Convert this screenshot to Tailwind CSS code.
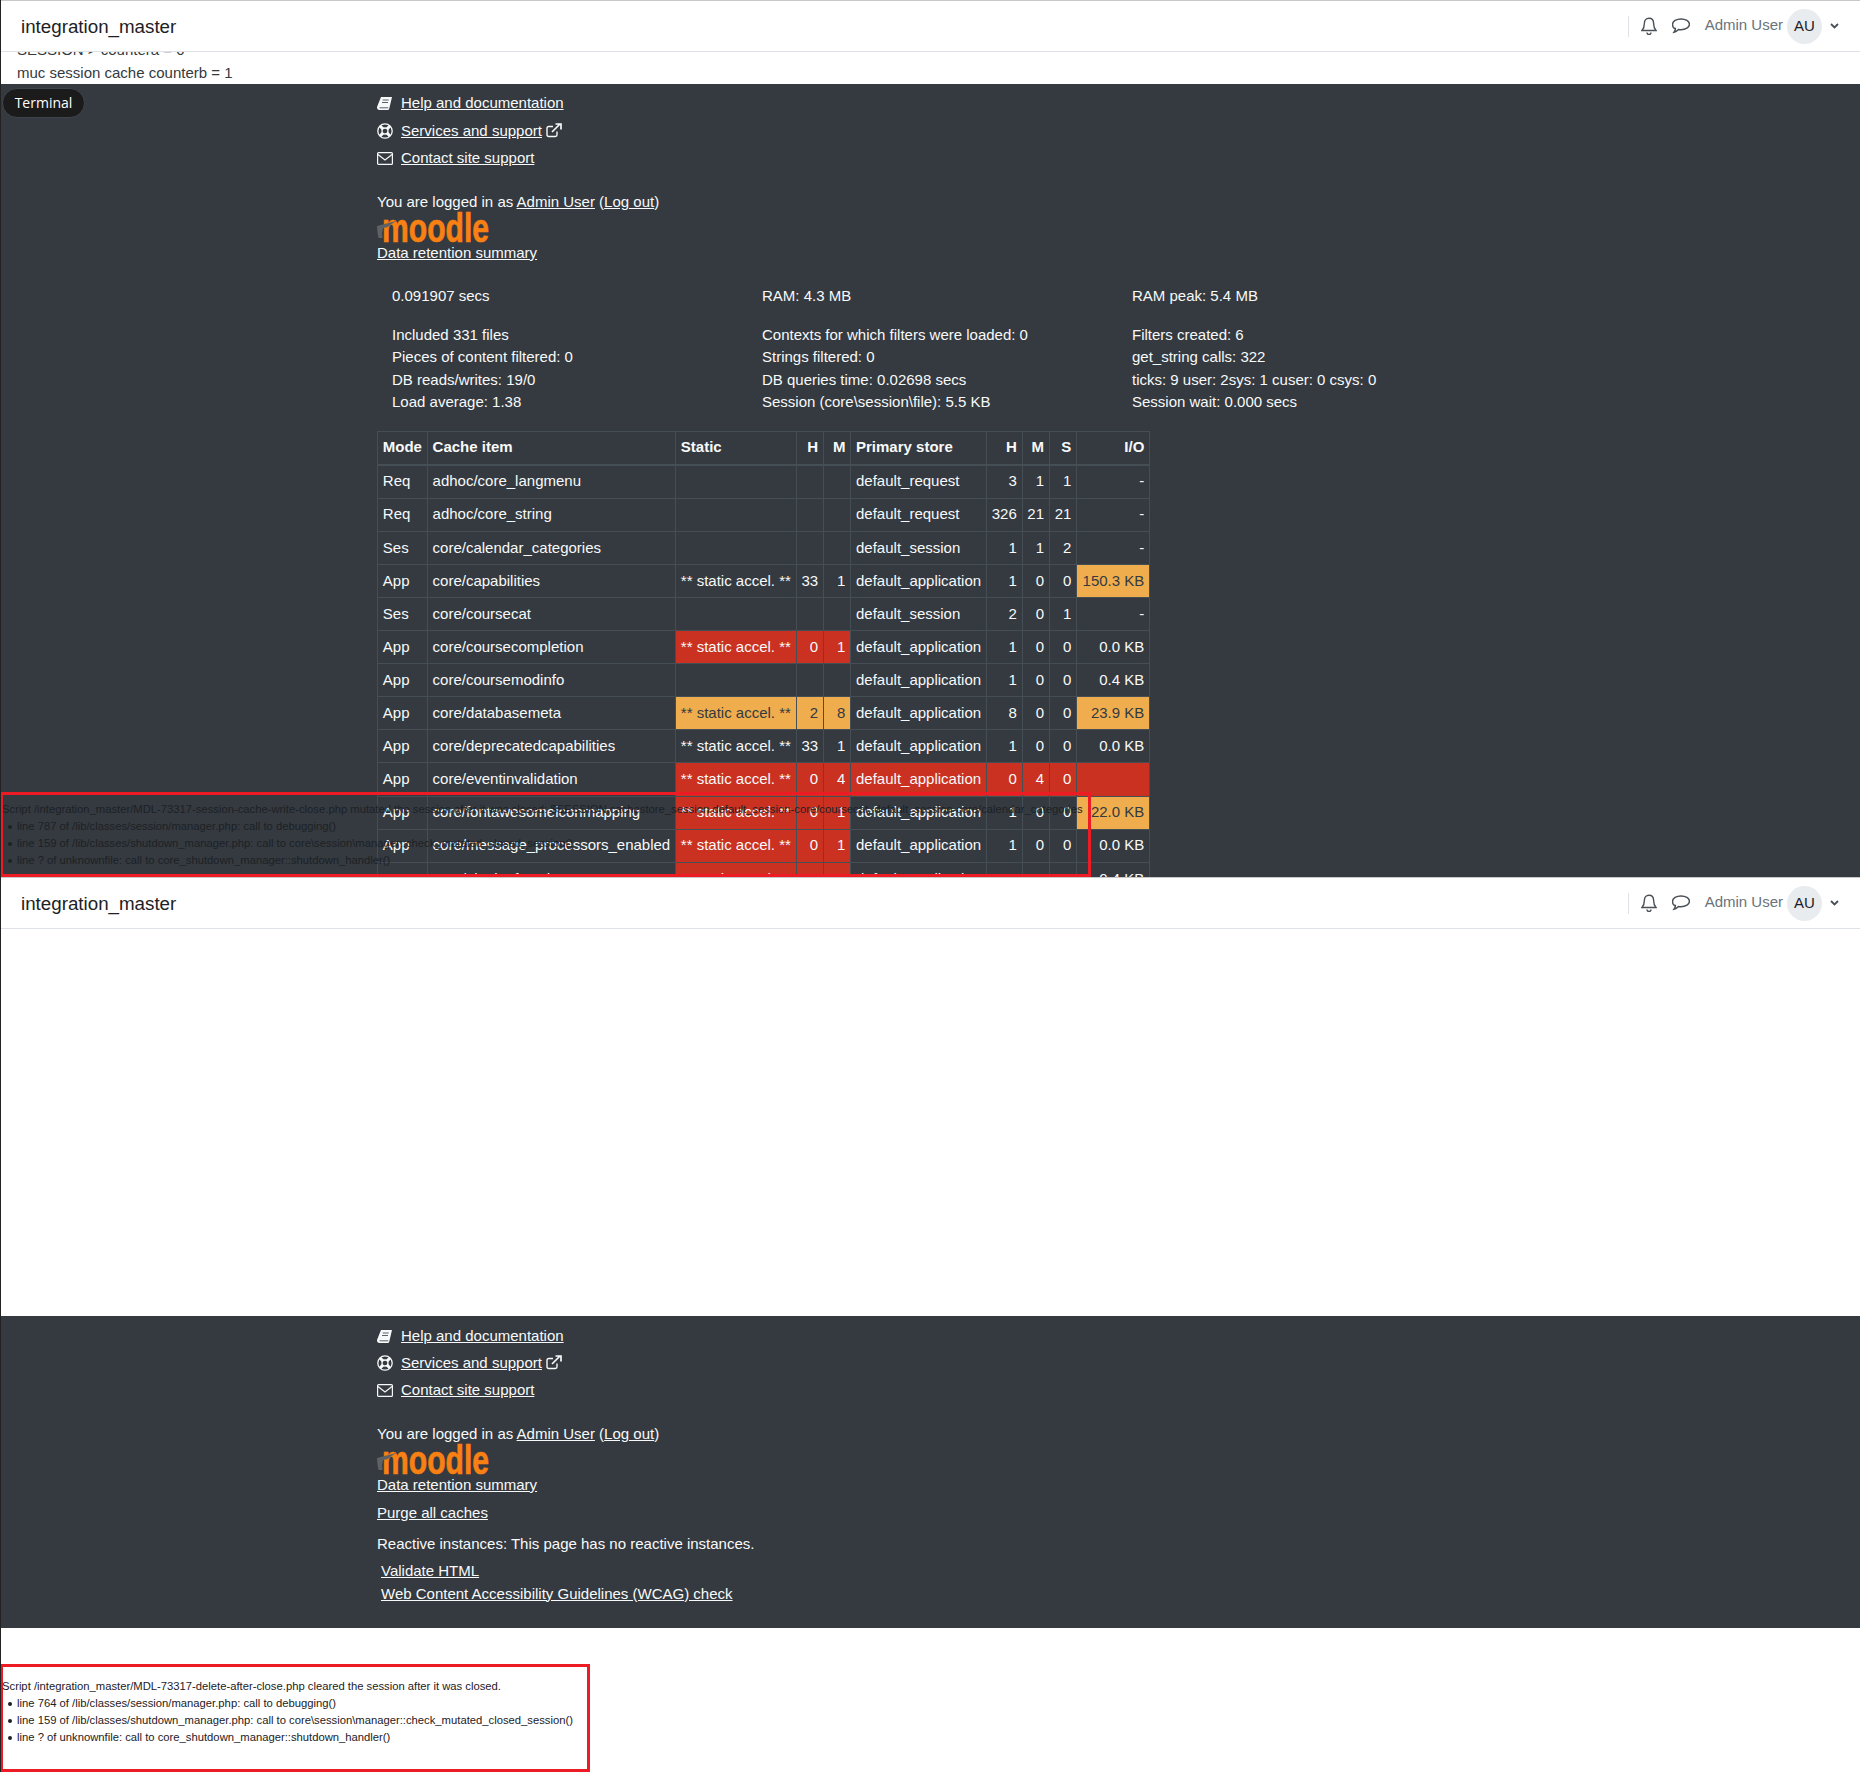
<!DOCTYPE html>
<html lang="en">
  <head>
    <meta charset="UTF-8" />
    <title>integration_master</title>
    <script src="https://cdn.jsdelivr.net/npm/@tailwindcss/browser@4"></script>
  </head>
  <body class="bg-white font-['Liberation_Sans',Arial,sans-serif] text-[15px] leading-[22.5px] text-[#1d2125]">
    <!-- first capture -->
    <div class="relative h-[877px] overflow-hidden border-l border-[#222]">
      <header class="flex h-[52px] items-center border-t border-b border-t-[#c8c8c8] border-b-[#dee2e6] pl-[20px] pr-[21px]">
        <span class="pt-[2px] text-[18.75px]">integration_master</span>
        <div class="ml-auto flex h-[21px] items-center border-l border-[#dee2e6] pl-[12px]">
          <svg class="h-[18px] w-[16px]" viewBox="0 0 16 18" fill="none" stroke="#495057" stroke-width="1.4"><path d="M8 1.2c-3 0-4.6 2.3-4.6 5 0 4-1 5.6-2.4 7.3h14c-1.400-1.700-2.400-3.300-2.400-7.300 0-2.700-1.600-5-4.600-5z" /><path d="M6 15.500a2 2 0 0 0 4 0" /></svg>
          <svg class="ml-[15px] h-[16px] w-[18px]" viewBox="0.500 0.500 16 14" fill="none" stroke="#495057" stroke-width="1.3"><path d="M8.500 1.200c4 0 7.500 2 7.500 4.800s-3.500 4.800-7.500 4.800c-.8 0-1.500-.1-2.200-.2-1 1-2.500 2.300-4 2.500.7-.9 1.100-2 1.200-3.300C2 9.800 1 8 1 6c0-2.800 3.500-4.800 7.500-4.800z" /></svg>
          <span class="mb-[2px] ml-[15px] text-[#6a737b]">Admin User</span>
          <span class="ml-[4px] flex h-[35px] w-[35px] items-center justify-center rounded-full bg-[#e9ecef]">AU</span>
          <svg class="ml-[8px] h-[8px] w-[9px]" viewBox="0 0 9 8" fill="none" stroke="#495057" stroke-width="1.800"><path d="M1 2l3.500 3.500L8 2" /></svg>
        </div>
      </header>
      <div class="flex h-[32px] flex-col justify-end overflow-hidden pl-[16px] text-[#343a40]">
        <div class="shrink-0">SESSION &gt; countera = 0</div>
        <div class="shrink-0">muc session cache counterb = 1</div>
      </div>
      <footer class="relative bg-[#343a40] pl-[376px] pt-[6px] text-[#f8f9fa]">
        <div class="absolute left-[1px] top-[4px] flex h-[30px] w-[83px] items-center justify-center rounded-full border border-[#3f454c] bg-[#1b1b1b] font-['Open_Sans',sans-serif] text-[14px] text-white">Terminal</div>
        <div class="flex h-[27px] items-center">
          <svg class="h-[14px] w-[15px]" viewBox="0 0 15 14" fill="#f8f9fa"><path d="M4 0H15l-2.700 11.500c-.2.800-.7 1.500-1.500 1.500H2.300C1 13 0 12 0 10.600c0-.4.100-.8.200-1.200z" /><path d="M5.700 3h6M5 5.500h6M2.500 10.800h8.800" stroke="#343a40" stroke-width=".8" /></svg>
          <a class="ml-[9px] underline" href="#">Help and documentation</a>
        </div>
        <div class="mt-[1px] flex h-[27px] items-center">
          <svg class="mb-[2px] h-[16px] w-[16px]" viewBox="0 0 16 16" fill="none" stroke="#f8f9fa"><circle cx="8" cy="8" r="7.200" stroke-width="1.300" /><circle cx="8" cy="8" r="3" stroke-width="1.300" /><path d="M3 3l2.900 2.900M13 3l-2.900 2.900M3 13l2.900-2.900M13 13l-2.900-2.900" stroke-width="3" /></svg>
          <a class="ml-[8px] underline" href="#">Services and support</a>
          <svg class="ml-[4px] mb-[3px] h-[15px] w-[16px]" viewBox="0 0 16 15" fill="none" stroke="#f8f9fa" stroke-width="1.400"><path d="M11 8.500v3.300c0 1-.7 1.700-1.700 1.700H2.700c-1 0-1.700-.7-1.700-1.700V5.200c0-1 .7-1.700 1.700-1.700H7" /><path d="M6 9l8-8M9.500 1H15v5.500" stroke-width="1.700" /></svg>
        </div>
        <div class="flex h-[27px] items-center">
          <svg class="h-[13px] w-[16px]" viewBox="0 0 16 13" fill="none" stroke="#f8f9fa" stroke-width="1.200"><rect x=".6" y=".6" width="14.800" height="11.800" rx="1" /><path d="M1 2.500l7 5.500 7-5.500" /></svg>
          <a class="ml-[8px] underline" href="#">Contact site support</a>
        </div>
        <p class="mt-[19px]">You are logged in as <a class="underline" href="#">Admin User</a> (<a class="underline" href="#">Log out</a>)</p>
        <svg class="block h-[28px] w-[115px] overflow-visible" viewBox="0 0 115 28" aria-label="moodle">
          <text x="5" y="28" textLength="107" lengthAdjust="spacingAndGlyphs" font-family="Liberation Sans" font-weight="700" font-size="40" fill="#f98012" stroke="#f98012" stroke-width=".7">moodle</text>
          <path d="M0 12L21 6.500Q14 9.500 11 13L6 14Q4.500 18 5.500 24H1.500Q0 18 0 12z" fill="#5f6264" />
        </svg>
        <a class="underline" href="#">Data retention summary</a>
        <div class="mt-[21px] grid w-[1125px] grid-cols-3 pl-[15px]">
          <div>0.091907 secs</div><div>RAM: 4.3 MB</div><div>RAM peak: 5.4 MB</div>
        </div>
        <div class="mt-[16px] grid w-[1125px] grid-cols-3 pl-[15px]">
          <div>Included 331 files</div><div>Contexts for which filters were loaded: 0</div><div>Filters created: 6</div>
          <div>Pieces of content filtered: 0</div><div>Strings filtered: 0</div><div>get_string calls: 322</div>
          <div>DB reads/writes: 19/0</div><div>DB queries time: 0.02698 secs</div><div>ticks: 9 user: 2sys: 1 cuser: 0 csys: 0</div>
          <div>Load average: 1.38</div><div>Session (core\session\file): 5.5 KB</div><div>Session wait: 0.000 secs</div>
        </div>
        <table class="mt-[17px] border-collapse whitespace-nowrap [&_td]:border [&_td]:border-[#454d55] [&_td]:p-[4.8px] [&_th]:border [&_th]:border-[#454d55] [&_th]:p-[4.8px]">
          <thead>
            <tr class="border-b-2 border-[#454d55] font-bold">
              <th class="text-left">Mode</th>
              <th class="text-left">Cache item</th>
              <th class="text-left">Static</th>
              <th class="text-right">H</th>
              <th class="text-right">M</th>
              <th class="text-left">Primary store</th>
              <th class="text-right">H</th>
              <th class="text-right">M</th>
              <th class="text-right">S</th>
              <th class="min-w-[73px] text-right">I/O</th>
            </tr>
          </thead>
          <tbody>
            <tr><td>Req</td><td>adhoc/core_langmenu</td><td></td><td></td><td></td><td>default_request</td><td class="text-right">3</td><td class="text-right">1</td><td class="text-right">1</td><td class="text-right">-</td></tr>
            <tr><td>Req</td><td>adhoc/core_string</td><td></td><td></td><td></td><td>default_request</td><td class="text-right">326</td><td class="text-right">21</td><td class="text-right">21</td><td class="text-right">-</td></tr>
            <tr><td>Ses</td><td>core/calendar_categories</td><td></td><td></td><td></td><td>default_session</td><td class="text-right">1</td><td class="text-right">1</td><td class="text-right">2</td><td class="text-right">-</td></tr>
            <tr><td>App</td><td>core/capabilities</td><td>** static accel. **</td><td class="text-right">33</td><td class="text-right">1</td><td>default_application</td><td class="text-right">1</td><td class="text-right">0</td><td class="text-right">0</td><td class="bg-[#f0ad4e] text-right text-[#343a40]">150.3 KB</td></tr>
            <tr><td>Ses</td><td>core/coursecat</td><td></td><td></td><td></td><td>default_session</td><td class="text-right">2</td><td class="text-right">0</td><td class="text-right">1</td><td class="text-right">-</td></tr>
            <tr><td>App</td><td>core/coursecompletion</td><td class="bg-[#ca3120]">** static accel. **</td><td class="bg-[#ca3120] text-right">0</td><td class="bg-[#ca3120] text-right">1</td><td>default_application</td><td class="text-right">1</td><td class="text-right">0</td><td class="text-right">0</td><td class="text-right">0.0 KB</td></tr>
            <tr><td>App</td><td>core/coursemodinfo</td><td></td><td></td><td></td><td>default_application</td><td class="text-right">1</td><td class="text-right">0</td><td class="text-right">0</td><td class="text-right">0.4 KB</td></tr>
            <tr><td>App</td><td>core/databasemeta</td><td class="bg-[#f0ad4e] text-[#343a40]">** static accel. **</td><td class="bg-[#f0ad4e] text-right text-[#343a40]">2</td><td class="bg-[#f0ad4e] text-right text-[#343a40]">8</td><td>default_application</td><td class="text-right">8</td><td class="text-right">0</td><td class="text-right">0</td><td class="bg-[#f0ad4e] text-right text-[#343a40]">23.9 KB</td></tr>
            <tr><td>App</td><td>core/deprecatedcapabilities</td><td>** static accel. **</td><td class="text-right">33</td><td class="text-right">1</td><td>default_application</td><td class="text-right">1</td><td class="text-right">0</td><td class="text-right">0</td><td class="text-right">0.0 KB</td></tr>
            <tr><td>App</td><td>core/eventinvalidation</td><td class="bg-[#ca3120]">** static accel. **</td><td class="bg-[#ca3120] text-right">0</td><td class="bg-[#ca3120] text-right">4</td><td class="bg-[#ca3120]">default_application</td><td class="bg-[#ca3120] text-right">0</td><td class="bg-[#ca3120] text-right">4</td><td class="bg-[#ca3120] text-right">0</td><td class="bg-[#ca3120] text-right"></td></tr>
            <tr><td>App</td><td>core/fontawesomeiconmapping</td><td class="bg-[#ca3120]">** static accel. **</td><td class="bg-[#ca3120] text-right">0</td><td class="bg-[#ca3120] text-right">1</td><td>default_application</td><td class="text-right">1</td><td class="text-right">0</td><td class="text-right">0</td><td class="bg-[#f0ad4e] text-right text-[#343a40]">22.0 KB</td></tr>
            <tr><td>App</td><td>core/message_processors_enabled</td><td class="bg-[#ca3120]">** static accel. **</td><td class="bg-[#ca3120] text-right">0</td><td class="bg-[#ca3120] text-right">1</td><td>default_application</td><td class="text-right">1</td><td class="text-right">0</td><td class="text-right">0</td><td class="text-right">0.0 KB</td></tr>
            <tr><td>App</td><td>core/plugin_functions</td><td class="bg-[#ca3120]">** static accel. **</td><td class="bg-[#ca3120] text-right">0</td><td class="bg-[#ca3120] text-right">10</td><td>default_application</td><td class="text-right">10</td><td class="text-right">0</td><td class="text-right">0</td><td class="text-right">0.4 KB</td></tr>
          </tbody>
        </table>
      </footer>
      <!-- debugging box lies over the page -->
      <div class="absolute bottom-0 left-[-1px] h-[85px] w-[1091px] overflow-hidden whitespace-nowrap border-[3px] border-[#ed1c24] pt-[6px] text-[11.25px] leading-[17px]">
        <div class="-ml-px">Script /integration_master/MDL-73317-session-cache-write-close.php mutated the session after it was closed: $SESSION.cachestore_session.default_session-core/coursecat, default_session-core/calendar_categories</div>
        <ul class="pl-[5px]">
          <li class="flex items-center before:mr-[5px] before:h-[4px] before:w-[4px] before:rounded-full before:bg-current before:content-['']">line 787 of /lib/classes/session/manager.php: call to debugging()</li>
          <li class="flex items-center before:mr-[5px] before:h-[4px] before:w-[4px] before:rounded-full before:bg-current before:content-['']">line 159 of /lib/classes/shutdown_manager.php: call to core\session\manager::check_mutated_closed_session()</li>
          <li class="flex items-center before:mr-[5px] before:h-[4px] before:w-[4px] before:rounded-full before:bg-current before:content-['']">line ? of unknownfile: call to core_shutdown_manager::shutdown_handler()</li>
        </ul>
      </div>
    </div>

    <!-- second capture -->
    <div class="h-[895px] overflow-hidden border-l border-[#222]">
      <header class="flex h-[52px] items-center border-t border-b border-t-[#c8c8c8] border-b-[#dee2e6] pl-[20px] pr-[21px]">
        <span class="pt-[2px] text-[18.75px]">integration_master</span>
        <div class="ml-auto flex h-[21px] items-center border-l border-[#dee2e6] pl-[12px]">
          <svg class="h-[18px] w-[16px]" viewBox="0 0 16 18" fill="none" stroke="#495057" stroke-width="1.4"><path d="M8 1.2c-3 0-4.6 2.3-4.6 5 0 4-1 5.6-2.4 7.3h14c-1.400-1.700-2.400-3.300-2.400-7.300 0-2.700-1.600-5-4.600-5z" /><path d="M6 15.500a2 2 0 0 0 4 0" /></svg>
          <svg class="ml-[15px] h-[16px] w-[18px]" viewBox="0.500 0.500 16 14" fill="none" stroke="#495057" stroke-width="1.3"><path d="M8.500 1.200c4 0 7.500 2 7.500 4.800s-3.500 4.800-7.500 4.800c-.8 0-1.500-.1-2.200-.2-1 1-2.500 2.300-4 2.500.7-.9 1.100-2 1.200-3.300C2 9.800 1 8 1 6c0-2.800 3.500-4.800 7.500-4.800z" /></svg>
          <span class="mb-[2px] ml-[15px] text-[#6a737b]">Admin User</span>
          <span class="ml-[4px] flex h-[35px] w-[35px] items-center justify-center rounded-full bg-[#e9ecef]">AU</span>
          <svg class="ml-[8px] h-[8px] w-[9px]" viewBox="0 0 9 8" fill="none" stroke="#495057" stroke-width="1.800"><path d="M1 2l3.500 3.500L8 2" /></svg>
        </div>
      </header>
      <div class="h-[387px]"></div>
      <footer class="h-[312px] bg-[#343a40] pl-[376px] pt-[7px] text-[#f8f9fa]">
        <div class="flex h-[27px] items-center">
          <svg class="h-[14px] w-[15px]" viewBox="0 0 15 14" fill="#f8f9fa"><path d="M4 0H15l-2.700 11.500c-.2.800-.7 1.500-1.500 1.500H2.300C1 13 0 12 0 10.600c0-.4.100-.8.200-1.200z" /><path d="M5.700 3h6M5 5.500h6M2.500 10.800h8.800" stroke="#343a40" stroke-width=".8" /></svg>
          <a class="ml-[9px] underline" href="#">Help and documentation</a>
        </div>
        <div class="flex h-[27px] items-center">
          <svg class="mb-[2px] h-[16px] w-[16px]" viewBox="0 0 16 16" fill="none" stroke="#f8f9fa"><circle cx="8" cy="8" r="7.200" stroke-width="1.300" /><circle cx="8" cy="8" r="3" stroke-width="1.300" /><path d="M3 3l2.900 2.900M13 3l-2.900 2.900M3 13l2.900-2.900M13 13l-2.900-2.900" stroke-width="3" /></svg>
          <a class="ml-[8px] underline" href="#">Services and support</a>
          <svg class="ml-[4px] mb-[3px] h-[15px] w-[16px]" viewBox="0 0 16 15" fill="none" stroke="#f8f9fa" stroke-width="1.400"><path d="M11 8.500v3.300c0 1-.7 1.700-1.700 1.700H2.700c-1 0-1.700-.7-1.700-1.700V5.200c0-1 .7-1.700 1.700-1.700H7" /><path d="M6 9l8-8M9.500 1H15v5.500" stroke-width="1.700" /></svg>
        </div>
        <div class="flex h-[27px] items-center">
          <svg class="h-[13px] w-[16px]" viewBox="0 0 16 13" fill="none" stroke="#f8f9fa" stroke-width="1.200"><rect x=".6" y=".6" width="14.800" height="11.800" rx="1" /><path d="M1 2.500l7 5.500 7-5.500" /></svg>
          <a class="ml-[8px] underline" href="#">Contact site support</a>
        </div>
        <p class="mt-[19px]">You are logged in as <a class="underline" href="#">Admin User</a> (<a class="underline" href="#">Log out</a>)</p>
        <svg class="block h-[28px] w-[115px] overflow-visible" viewBox="0 0 115 28" aria-label="moodle">
          <text x="5" y="28" textLength="107" lengthAdjust="spacingAndGlyphs" font-family="Liberation Sans" font-weight="700" font-size="40" fill="#f98012" stroke="#f98012" stroke-width=".7">moodle</text>
          <path d="M0 12L21 6.500Q14 9.500 11 13L6 14Q4.500 18 5.500 24H1.500Q0 18 0 12z" fill="#5f6264" />
        </svg>
        <a class="block underline" href="#">Data retention summary</a>
        <a class="mt-[6px] block underline" href="#">Purge all caches</a>
        <p class="mt-[8px]">Reactive instances: This page has no reactive instances.</p>
        <ul class="mt-[5px] pl-[4px]">
          <li><a class="underline" href="#">Validate HTML</a></li>
          <li><a class="underline" href="#">Web Content Accessibility Guidelines (WCAG) check</a></li>
        </ul>
      </footer>
      <div class="mt-[36px] h-[108px] w-[590px] -ml-px whitespace-nowrap border-[3px] border-[#ed1c24] pt-[11px] text-[11.25px] leading-[17px]">
        <div class="-ml-px">Script /integration_master/MDL-73317-delete-after-close.php cleared the session after it was closed.</div>
        <ul class="pl-[5px]">
          <li class="flex items-center before:mr-[5px] before:h-[4px] before:w-[4px] before:rounded-full before:bg-current before:content-['']">line 764 of /lib/classes/session/manager.php: call to debugging()</li>
          <li class="flex items-center before:mr-[5px] before:h-[4px] before:w-[4px] before:rounded-full before:bg-current before:content-['']">line 159 of /lib/classes/shutdown_manager.php: call to core\session\manager::check_mutated_closed_session()</li>
          <li class="flex items-center before:mr-[5px] before:h-[4px] before:w-[4px] before:rounded-full before:bg-current before:content-['']">line ? of unknownfile: call to core_shutdown_manager::shutdown_handler()</li>
        </ul>
      </div>
    </div>
  </body>
</html>
